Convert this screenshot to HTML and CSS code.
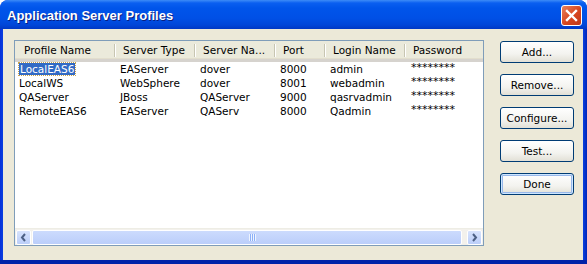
FILE: index.html
```html
<!DOCTYPE html>
<html lang="en">
<head>
  <meta charset="UTF-8" />
  <title>Application Server Profiles</title>
  <link rel="stylesheet" href="styles.css">
</head>
<body>
  <div class="window">
    <div class="titlebar">
      <span class="title">Application Server Profiles</span>
      <button class="close-btn">
        <svg width="13" height="13" viewBox="0 0 13 13">
          <path d="M2 2 L11 11 M11 2 L2 11" stroke="#fff" stroke-width="2.4" stroke-linecap="square"/>
        </svg>
      </button>
    </div>

    <div class="dialog-body">
      <!-- list of profiles -->
      <div class="listview">
        <div class="lv-header">
          <div class="col c1">Profile Name</div>
          <div class="col c2">Server Type</div>
          <div class="col c3">Server Na...</div>
          <div class="col c4">Port</div>
          <div class="col c5">Login Name</div>
          <div class="col c6">Password</div>
        </div>
        <div class="lv-rows">
          <div class="row">
            <div class="cell c1"><span class="selected">LocalEAS6</span></div>
            <div class="cell c2">EAServer</div>
            <div class="cell c3">dover</div>
            <div class="cell c4">8000</div>
            <div class="cell c5">admin</div>
            <div class="cell c6 pw">********</div>
          </div>
          <div class="row">
            <div class="cell c1">LocalWS</div>
            <div class="cell c2">WebSphere</div>
            <div class="cell c3">dover</div>
            <div class="cell c4">8001</div>
            <div class="cell c5">webadmin</div>
            <div class="cell c6 pw">********</div>
          </div>
          <div class="row">
            <div class="cell c1">QAServer</div>
            <div class="cell c2">JBoss</div>
            <div class="cell c3">QAServer</div>
            <div class="cell c4">9000</div>
            <div class="cell c5">qasrvadmin</div>
            <div class="cell c6 pw">********</div>
          </div>
          <div class="row">
            <div class="cell c1">RemoteEAS6</div>
            <div class="cell c2">EAServer</div>
            <div class="cell c3">QAServ</div>
            <div class="cell c4">8000</div>
            <div class="cell c5">Qadmin</div>
            <div class="cell c6 pw">********</div>
          </div>
        </div>
        <div class="hscroll">
          <div class="sb-btn">
            <svg width="7" height="9" viewBox="0 0 7 9"><path d="M5 1 L2 4.5 L5 8" stroke="#4D6185" stroke-width="2" fill="none"/></svg>
          </div>
          <div class="sb-thumb">
            <span class="grip"></span>
          </div>
          <div class="sb-btn">
            <svg width="7" height="9" viewBox="0 0 7 9"><path d="M2 1 L5 4.5 L2 8" stroke="#4D6185" stroke-width="2" fill="none"/></svg>
          </div>
        </div>
      </div>

      <div class="buttons">
        <button class="btn">Add...</button>
        <button class="btn">Remove...</button>
        <button class="btn">Configure...</button>
        <button class="btn">Test...</button>
        <button class="btn default">Done</button>
      </div>
    </div>
  </div>
</body>
</html>
```

FILE: styles.css
```css
body {
  margin: 0;
  background: #fff;
  font-family: "DejaVu Sans", sans-serif;
  font-size: 10.5px;
  color: #000;
}

.window {
  width: 587px;
  height: 264px;
  box-sizing: border-box;
  display: flex;
  flex-direction: column;
  background: linear-gradient(to right, #0831D9, #0A3FE0 3px, #0A3FE0 583px, #0026B8);
  border-radius: 8px 8px 0 0;
  border-bottom: 4px solid #0022A8;
  overflow: hidden;
}

/* title bar */
.titlebar {
  height: 29px;
  flex-shrink: 0;
  display: flex;
  align-items: center;
  justify-content: space-between;
  padding: 0 5px 0 7px;
  background: linear-gradient(to bottom, #3D8CF7 0px, #0A5FF0 3px, #0055EA 8px, #0050E6 18px, #0046D8 25px, #0038C4 29px);
}

.title {
  font-family: "Liberation Sans", sans-serif;
  font-weight: bold;
  font-size: 13px;
  color: #fff;
  text-shadow: 1px 1px 0 #0A1E80;
  margin-top: 1px;
}

.close-btn {
  width: 21px;
  height: 21px;
  padding: 0;
  border: 1px solid #fff;
  border-radius: 3px;
  background: linear-gradient(135deg, #E8825E, #D7451E 55%, #C0381A);
  display: flex;
  align-items: center;
  justify-content: center;
  margin-top: 1px;
}

/* dialog body */
.dialog-body {
  flex: 1;
  margin: 0 4px 0 3px;
  background: #ECE9D8;
  display: flex;
  padding: 11px 0 0 11px;
  gap: 16px;
}

.listview {
  width: 470px;
  height: 206px;
  box-sizing: border-box;
  border: 1px solid #7F9DB9;
  background: #fff;
  display: flex;
  flex-direction: column;
  overflow: hidden;
}

.lv-header {
  height: 21px;
  flex-shrink: 0;
  display: flex;
  background: #EBEADB;
  border-bottom: 3px solid #D6D3CE;
  box-sizing: border-box;
  box-shadow: inset 0 -1px 0 #E2DECD;
}

.col {
  flex-shrink: 0;
  display: flex;
  align-items: center;
  padding-left: 9px;
  box-sizing: border-box;
  position: relative;
  color: #000;
}

.col + .col::before {
  content: "";
  position: absolute;
  left: 0;
  top: 3px;
  height: 13px;
  width: 1px;
  background: #C7C5B2;
  box-shadow: 1px 0 0 #fff;
}

.c1 { width: 99px; }
.c2 { width: 80px; }
.c3 { width: 80px; }
.c4 { width: 50px; }
.c5 { width: 80px; }
.c6 { width: 90px; }

.lv-rows {
  flex: 1;
}

.row {
  display: flex;
  height: 14px;
  align-items: center;
}

.cell {
  flex-shrink: 0;
  padding-left: 6px;
  box-sizing: border-box;
  white-space: nowrap;
}

.row .c1 { padding-left: 4px; }

.selected {
  background: #316AC5;
  color: #fff;
  padding: 0 1px;
  outline: 1px dotted #C9A34A;
}

.pw {
  font-size: 11px;
  padding-left: 7px;
  position: relative;
  top: -2px;
}

/* horizontal scroll bar */
.hscroll {
  height: 17px;
  flex-shrink: 0;
  display: flex;
  background: #F3F1EC;
  padding: 1px 1px 0 1px;
  box-sizing: border-box;
  border-top: 1px solid #EEEDE5;
}

.sb-btn {
  width: 15px;
  height: 15px;
  box-sizing: border-box;
  border: 1px solid #fff;
  border-radius: 2px;
  background: linear-gradient(to bottom, #D7E3FD, #BBCEF9);
  display: flex;
  align-items: center;
  justify-content: center;
  flex-shrink: 0;
}

.sb-thumb {
  flex: 1;
  height: 15px;
  margin: 0 5px 0 1px;
  box-sizing: border-box;
  border: 1px solid #fff;
  border-radius: 2px;
  background: linear-gradient(to bottom, #CCDBFD, #BBCEFA);
  display: flex;
  align-items: center;
  justify-content: center;
}

.grip {
  width: 7px;
  height: 7px;
  margin-left: 10px;
  background: repeating-linear-gradient(to right, #EEF4FE 0 1px, #8CB0F8 1px 2px);
}

/* buttons */
.buttons {
  display: flex;
  flex-direction: column;
  gap: 11px;
  padding-top: 1px;
}

.btn {
  width: 74px;
  height: 22px;
  border: 1px solid #003C74;
  border-radius: 3px;
  background: linear-gradient(to bottom, #FFFFFF, #F3F3EF 60%, #E2E0D6);
  font-family: "DejaVu Sans", sans-serif;
  font-size: 10.5px;
  color: #000;
  padding: 0;
}

.btn.default {
  box-shadow: inset 0 0 0 1px #CEE7FF, inset 0 0 0 2px #98B8EA;
}
```
